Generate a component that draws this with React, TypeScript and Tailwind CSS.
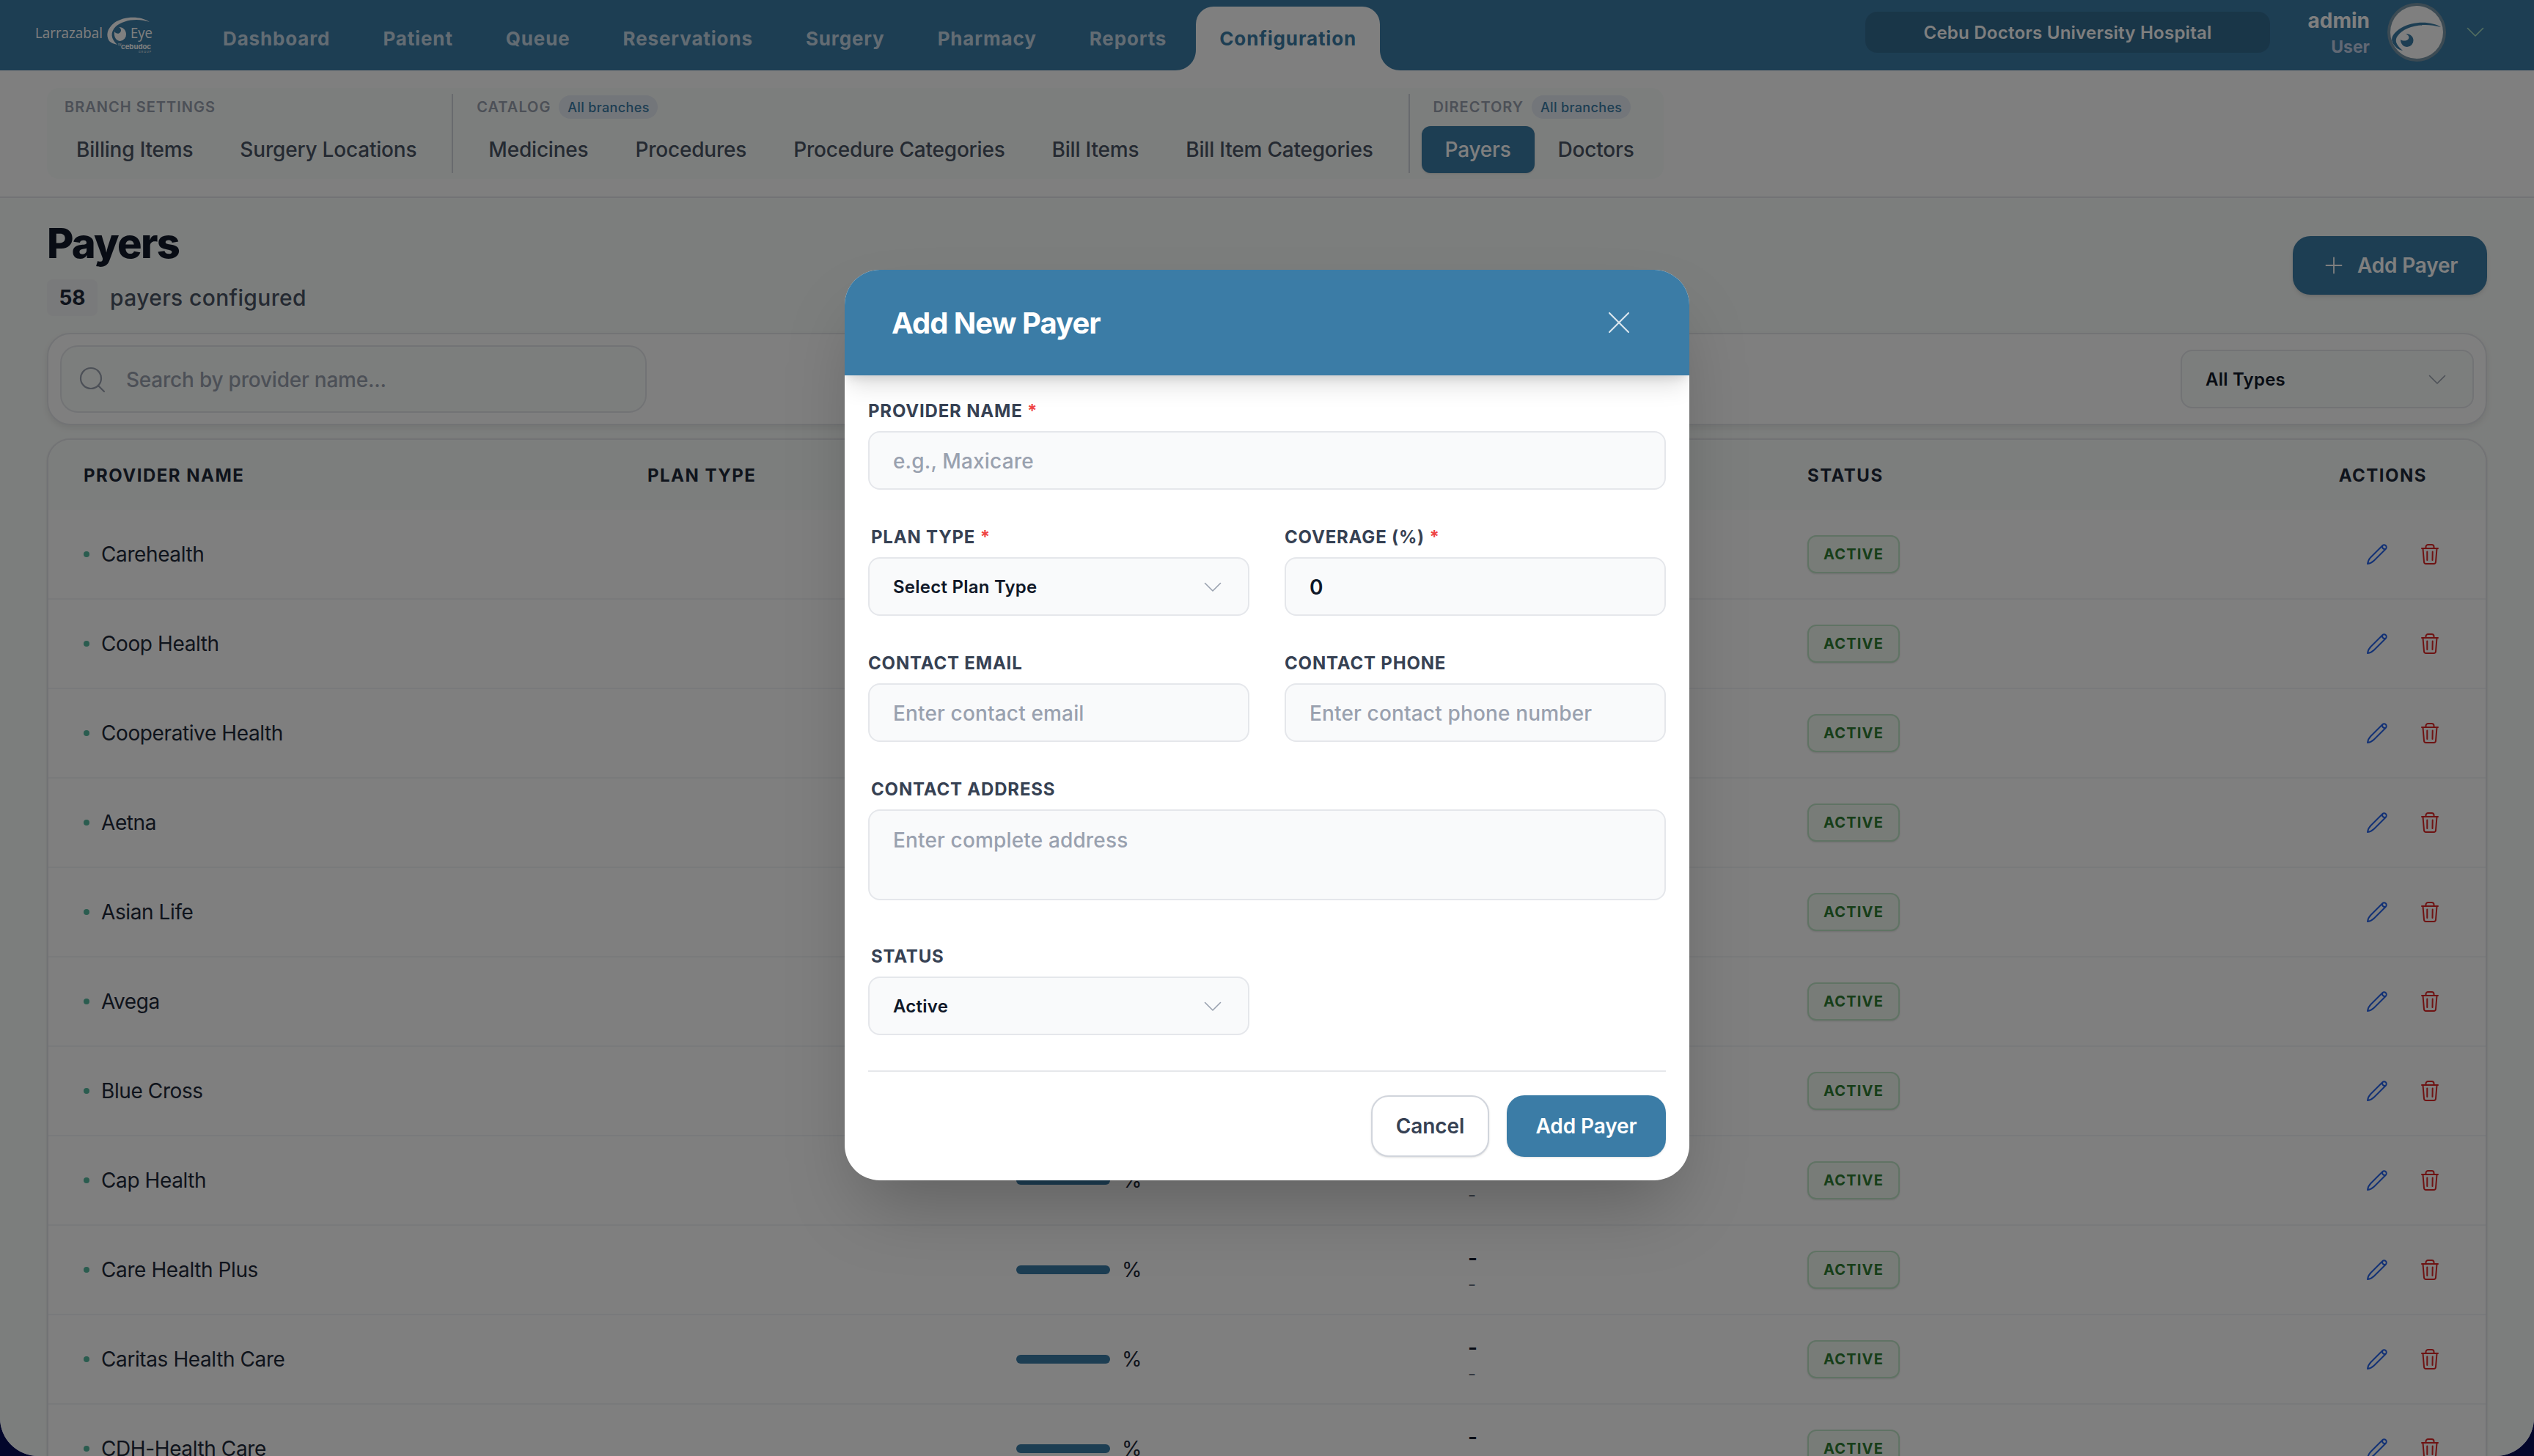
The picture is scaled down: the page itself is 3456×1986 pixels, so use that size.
import { useState } from 'react';

const navItems = ['Dashboard', 'Patient', 'Queue', 'Reservations', 'Surgery', 'Pharmacy', 'Reports', 'Configuration'];

const groups = [
  { label: 'Branch Settings', shared: false, items: ['Billing Items', 'Surgery Locations'] },
  {
    label: 'Catalog',
    shared: true,
    items: ['Medicines', 'Procedures', 'Procedure Categories', 'Bill Items', 'Bill Item Categories'],
  },
  { label: 'Directory', shared: true, items: ['Payers', 'Doctors'] },
];

const payers = [
  'Carehealth',
  'Coop Health',
  'Cooperative Health',
  'Aetna',
  'Asian Life',
  'Avega',
  'Blue Cross',
  'Cap Health',
  'Care Health Plus',
  'Caritas Health Care',
  'CDH-Health Care',
];

function ChevronIcon({ className }: { className?: string }) {
  return (
    <svg viewBox="0 0 24 14" fill="none" stroke="currentColor" strokeWidth="1.6" strokeLinecap="round" strokeLinejoin="round" className={className}>
      <path d="M1.5 1.5 12 12 22.5 1.5" />
    </svg>
  );
}

function PencilIcon() {
  return (
    <svg viewBox="0 0 28 28" fill="none" stroke="currentColor" strokeWidth="2" strokeLinejoin="round" className="h-7 w-7 text-[#2563eb]">
      <path d="M21.300 2.200a3 3 0 0 1 4.500 4.500L10 22.500c-2.300 2.300-5.200 4-9 4.500.5-3.800 2.200-6.700 4.500-9L21.300 2.200Z" />
      <path d="M21.300 2.500c-.9 2.800 1.400 5.100 4.200 4.200" />
    </svg>
  );
}

function TrashIcon() {
  return (
    <svg viewBox="0 0 24 28" fill="none" stroke="currentColor" strokeWidth="2" strokeLinecap="round" strokeLinejoin="round" className="h-7 w-6 text-[#dc2626]">
      <path d="M1 6h22" />
      <path d="M6.500 5.500V4a3 3 0 0 1 3-3h5a3 3 0 0 1 3 3v1.500" />
      <path d="M2.500 6.500 4 24.500A2.700 2.700 0 0 0 6.700 27h10.600a2.700 2.700 0 0 0 2.700-2.500L21.500 6.500" />
      <path d="M8.300 10.500v11.500M15.700 10.500l-.2 11.500" />
    </svg>
  );
}

function Logo() {
  return (
    <svg viewBox="0 0 160 48" className="h-12 w-40 overflow-visible" fill="#fff">
      <text x="0" y="29" fontSize="19.500" textLength="92" lengthAdjust="spacingAndGlyphs" fontFamily="Open Sans, sans-serif" fontWeight="400">Larrazabal</text>
      <text x="130" y="29" fontSize="19.500" textLength="30" lengthAdjust="spacingAndGlyphs" fontFamily="Open Sans, sans-serif" fontWeight="400">Eye</text>
      {/* lid */}
      <path d="M156 7C143-2 121-1 108 8c-10 8-12 17-7 25 2 2 6 4 11 5-9-8-10-17-2-25C120 4 140 1 156 7Z" />
      {/* iris */}
      <path d="M114 14c3 1 4 5 2 7-2 3-6 2-8-1-1 8 3 13 8 13a9 9 0 0 0 8-9.500c0-6-5-10-10-9.500Z" />
      <text x="117" y="44" fontSize="9.500" textLength="41" lengthAdjust="spacingAndGlyphs" fontFamily="Inter, sans-serif" fontWeight="700">cebudoc</text>
      <text x="113" y="39" fontSize="4" fontFamily="Inter, sans-serif">by</text>
      <text x="141" y="49" fontSize="3.500" textLength="17" fontFamily="Inter, sans-serif">GROUP</text>
    </svg>
  );
}

function Avatar() {
  return (
    <div className="h-20 w-20 rounded-full bg-[#7896a8] p-1">
      <svg viewBox="0 0 72 72" className="h-full w-full rounded-full bg-white" fill="#3b7ca6">
        <path d="M69 29C57 21 32 20 15 30 5 36 0 43 3 50c3 6 8 10 14 11-8-7-12-13-7-20C19 28 44 22 69 29Z" />
        <path d="M21 38c4 2 6 5 3 8-3 2-7 2-10 0 0 6 4 10 9 10a8.700 8.700 0 0 0 8.500-9c0-5-4-9-10.500-9Z" />
      </svg>
    </div>
  );
}

function Header() {
  return (
    <header className="flex h-24 shrink-0 items-stretch bg-[#3b7ca6]">
      <div className="w-[272px] pt-[23px] pl-12">
        <Logo />
      </div>
      <nav className="flex gap-2 pt-[9px]">
        {navItems.map((item) =>
          item === 'Configuration' ? (
            <button key={item} className="relative flex items-start rounded-t-[24px] bg-white px-8 pt-6 text-[26px] leading-[40px] font-bold tracking-[0.033em] text-[#3b7ca6]">
              <svg viewBox="0 0 28 28" className="absolute bottom-0 -left-7 h-7 w-7" fill="#fff">
                <path d="M28 0v28H0C16 28 28 16 28 0Z" />
              </svg>
              {item}
              <svg viewBox="0 0 28 28" className="absolute -right-7 bottom-0 h-7 w-7" fill="#fff">
                <path d="M0 0v28h28C12 28 0 16 0 0Z" />
              </svg>
            </button>
          ) : (
            <button key={item} className="flex items-start px-8 pt-6 text-[26px] leading-[40px] font-bold tracking-[0.033em] text-[#c6d9e6]">
              {item}
            </button>
          )
        )}
      </nav>
      <div className="ml-auto flex items-start pr-[68px]">
        <div className="mt-4 flex h-14 w-[552px] items-center justify-center rounded-2xl bg-black/12 pt-0.5 text-2xl font-semibold tracking-[0.01em] text-white">
          Cebu Doctors University Hospital
        </div>
        <div className="mt-2 ml-12 w-[88px] text-right">
          <div className="text-[28px] leading-10 font-bold text-white">admin</div>
          <div className="text-[23px] leading-8 font-bold text-[#c3d0e8]">User</div>
        </div>
        <div className="mt-1 ml-6">
          <Avatar />
        </div>
        <ChevronIcon className="mt-[37px] ml-7 h-3.5 w-6 text-[#a7dcc0]" />
      </div>
    </header>
  );
}

function SubNav() {
  return (
    <div className="flex h-[174px] shrink-0 items-start border-b-2 border-gray-200 bg-white px-16 pt-6">
      <div className="flex h-[124px] rounded-2xl bg-[#f9fcfa] p-2">
        {groups.map((group, i) => (
          <div key={group.label} className={i > 0 ? 'ml-4 border-l-2 border-gray-300 pl-4' : ''}>
            <div className="flex h-9 items-center gap-[11px] pl-4">
              <span className="text-xl font-semibold tracking-[0.05em] text-gray-400 uppercase">{group.label}</span>
              {group.shared && (
                <span className="flex h-8 w-[135px] items-center justify-center rounded-full bg-[#e6ecf5] text-[18px] font-medium tracking-[0.02em] text-[#3b7ca6]">
                  All branches
                </span>
              )}
            </div>
            <div className="mt-2 flex">
              {group.items.map((item) => (
                <button
                  key={item}
                  className={
                    item === 'Payers'
                      ? 'h-16 rounded-xl bg-[#3b7ca6] px-8 text-[28px] font-medium tracking-[-0.2px] text-white shadow-sm'
                      : 'h-16 rounded-xl px-8 text-[28px] font-medium tracking-[-0.2px] text-gray-600'
                  }
                >
                  {item}
                </button>
              ))}
            </div>
          </div>
        ))}
      </div>
    </div>
  );
}

function PayersTable() {
  return (
    <div className="mt-[18px] h-[1600px] shrink-0 overflow-hidden rounded-[32px] border-2 border-gray-200 bg-white shadow-sm">
      <div className="grid h-24 grid-cols-[769px_503px_617px_462px_1fr] items-center bg-[#f9fcfa] pt-0.5 text-2xl font-bold tracking-[0.062em] text-gray-800 uppercase">
        <div className="pl-12">Provider Name</div>
        <div className="pl-12">Plan Type</div>
        <div className="pl-12">Coverage</div>
        <div className="pl-12">Contact</div>
        <div className="flex justify-between pr-20 pl-12">
          <span>Status</span>
          <span>Actions</span>
        </div>
      </div>
      {payers.map((name) => (
        <div key={name} className="grid h-[122px] grid-cols-[769px_503px_617px_462px_1fr] items-center border-b-2 border-gray-100">
          <div className="flex items-center gap-4 pl-12 text-[28px] tracking-[-0.4px] text-gray-800">
            <span className="h-2 w-2 rounded-full bg-[#55b89f]" />
            {name}
          </div>
          <div />
          <div className="flex items-center gap-4 pl-12 text-[28px] text-gray-800">
            <span className="h-3 w-32 rounded-full bg-[#3b7ca6]" />%
          </div>
          <div className="-ml-px pl-12">
            <div className="text-[28px] leading-10 font-semibold text-gray-900">-</div>
            <div className="text-2xl leading-8 text-gray-500">-</div>
          </div>
          <div className="flex items-center justify-between pr-16 pl-12">
            <span className="flex h-[52px] w-[126px] items-center justify-center rounded-xl border-2 border-[#c0e6c8] bg-[#f0f9f1] text-xl font-bold tracking-[0.06em] text-[#2e7d32] shadow-sm">
              ACTIVE
            </span>
            <div className="flex items-center gap-[46px]">
              <PencilIcon />
              <TrashIcon />
            </div>
          </div>
        </div>
      ))}
    </div>
  );
}

function PayersPage() {
  return (
    <main className="flex flex-1 flex-col px-16">
      <div className="flex items-start justify-between pt-6">
        <div>
          <h1 className="mt-1.5 text-[56px] leading-[64px] font-extrabold tracking-[-0.03em] text-gray-900">Payers</h1>
          <div className="mt-[17px] flex items-center gap-[17px]">
            <span className="flex h-[50px] w-[69px] items-center justify-center rounded-lg bg-gray-100 text-[28px] font-bold text-gray-800">58</span>
            <span className="text-[30px] font-medium tracking-[0.012em] text-gray-600">payers configured</span>
          </div>
        </div>
        <button className="mt-7 flex h-20 w-[265px] items-center rounded-[24px] bg-[#3b7ca6] pl-11 text-[28px] font-semibold tracking-[-0.2px] text-white shadow-md">
          <svg viewBox="0 0 24 24" className="mr-5 h-6 w-6" stroke="currentColor" strokeWidth="1.800" strokeLinecap="round">
            <path d="M12 1.500v21M1.500 12h21" />
          </svg>
          Add Payer
        </button>
      </div>

      {/* Filters */}
      <div className="mt-[23px] flex h-[126px] shrink-0 items-center justify-between rounded-[32px] border-2 border-gray-200 bg-white px-4 shadow-[0_4px_8px_rgba(0,0,0,0.08)]">
        <div className="flex h-[92px] w-[800px] items-center rounded-[24px] border-2 border-gray-200 bg-[#f9fcfa] pt-0.5 pl-6">
          <svg viewBox="0 0 36 36" fill="none" className="mr-7 h-9 w-9 text-gray-400" stroke="currentColor" strokeWidth="2.200" strokeLinecap="round">
            <circle cx="16" cy="16" r="14" />
            <path d="m26.500 26.500 7.500 7.500" />
          </svg>
          <span className="text-[28px] font-medium tracking-[-0.22px] text-gray-400">Search by provider name...</span>
        </div>
        <div className="flex h-20 w-[400px] items-center justify-between rounded-2xl border-2 border-gray-200 bg-[#f9fcfa] pt-0.5 pr-9 pl-8 text-2xl font-semibold tracking-[0.01em] text-gray-900">
          All Types
          <ChevronIcon className="h-3.5 w-6 text-gray-400" />
        </div>
      </div>

      <PayersTable />
    </main>
  );
}

function Label({ text, required, inset }: { text: string; required?: boolean; inset?: boolean }) {
  return (
    <div className={`mb-[11px] pt-px text-2xl leading-8 font-bold tracking-[0.034em] text-gray-700 uppercase ${inset ? 'pl-1' : ''}`}>
      {text}
      {required && <span className="text-[#ef4444]"> *</span>}
    </div>
  );
}

const inputClass =
  'block h-20 w-full rounded-2xl border-2 border-gray-200 bg-gray-50 px-8 pt-0.5 text-[28px] font-medium tracking-[0.15px] text-gray-900 placeholder:text-gray-400';

function SelectBox({ value }: { value: string }) {
  return (
    <div className="flex h-20 items-center justify-between rounded-2xl border-2 border-gray-200 bg-gray-50 pt-0.5 pr-9 pl-8 text-2xl font-semibold tracking-[0.01em] text-gray-900">
      {value}
      <ChevronIcon className="h-3.5 w-6 text-gray-400" />
    </div>
  );
}

function AddPayerModal() {
  const [coverage, setCoverage] = useState('0');

  return (
    <div className="w-[1152px] overflow-hidden rounded-[48px] bg-white shadow-[0_50px_100px_-24px_rgba(0,0,0,0.25)]">
      <div className="flex h-36 items-center justify-between bg-[#3b7ca6] pr-20 pl-16 shadow-[0_20px_30px_-6px_rgba(0,0,0,0.12),0_8px_12px_-4px_rgba(0,0,0,0.1)]">
        <h2 className="pt-0.5 text-[40px] font-bold tracking-[-0.025em] text-white">Add New Payer</h2>
        <svg viewBox="0 0 32 32" className="h-8 w-8 text-white/80" stroke="currentColor" strokeWidth="2.200" strokeLinecap="round">
          <path d="m3 3 26 26M29 3 3 29" />
        </svg>
      </div>
      <div className="p-8">
        <Label text="Provider Name" required />
        <input className={inputClass} placeholder="e.g., Maxicare" />
        <div className="mt-12 grid grid-cols-2 gap-12">
          <div>
            <Label text="Plan Type" required inset />
            <SelectBox value="Select Plan Type" />
          </div>
          <div>
            <Label text="Coverage (%)" required />
            <input className={`${inputClass} font-semibold`} value={coverage} onChange={(e) => setCoverage(e.target.value)} />
          </div>
          <div>
            <Label text="Contact Email" />
            <input className={inputClass} placeholder="Enter contact email" />
          </div>
          <div>
            <Label text="Contact Phone" />
            <input className={inputClass} placeholder="Enter contact phone number" />
          </div>
        </div>
        <div className="mt-12">
          <Label text="Contact Address" inset />
          <textarea
            className="block h-[124px] w-full resize-none rounded-2xl border-2 border-gray-200 bg-gray-50 px-8 py-5 text-[28px] leading-10 font-medium tracking-[0.15px] placeholder:text-gray-400"
            placeholder="Enter complete address"
          />
        </div>
        <div className="mt-[60px] w-[520px]">
          <Label text="Status" inset />
          <SelectBox value="Active" />
        </div>
        <div className="mt-12 flex justify-end gap-6 border-t-2 border-gray-200 pt-8">
          <button className="h-[84px] w-[161px] rounded-[24px] border-2 border-gray-300 bg-white text-[28px] font-semibold tracking-[-0.1px] text-gray-700 shadow-sm">Cancel</button>
          <button className="h-[84px] w-[217px] rounded-[24px] bg-[#3b7ca6] text-[28px] font-semibold tracking-[-0.1px] text-white shadow-sm">Add Payer</button>
        </div>
      </div>
    </div>
  );
}

export default function App() {
  return (
    <div className="h-[1986px] w-[3456px] overflow-hidden bg-[#03062b] font-['Inter',sans-serif] whitespace-nowrap">
      <div className="relative flex h-full flex-col overflow-hidden rounded-b-[52px] bg-[#f9fcfa]">
        <Header />
        <SubNav />
        <PayersPage />
        <div className="absolute inset-0 flex items-start justify-center bg-black/50 pt-[368px]">
          <AddPayerModal />
        </div>
      </div>
    </div>
  );
}
